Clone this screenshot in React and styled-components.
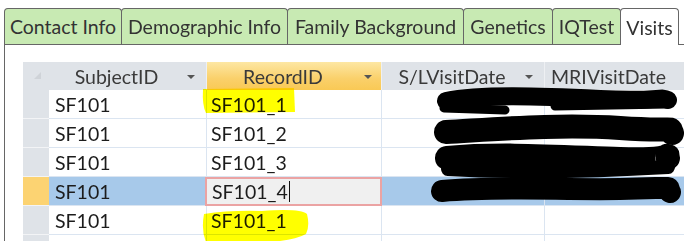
import React from 'react';
import styled, { createGlobalStyle } from 'styled-components';

const GlobalStyle = createGlobalStyle`
  html, body {
    margin: 0;
    padding: 0;
    background: #fff;
  }
  * {
    box-sizing: border-box;
  }
`;

const COLS = '26px 158px 175px 163px 150px';

const Page = styled.div`
  width: 684px;
  height: 241px;
  overflow: hidden;
  font-family: Lato, "Open Sans", sans-serif;
  background: #fff;
`;

const TabBar = styled.div`
  display: flex;
  align-items: flex-end;
  padding: 8px 0 0 4px;
  height: 44px;
`;

const Tab = styled.div`
  position: relative;
  height: ${p => (p.$active ? '37px' : '36px')};
  margin-bottom: ${p => (p.$active ? '-1px' : '0')};
  margin-left: -1px;
  z-index: ${p => (p.$active ? 2 : 1)};
  width: ${p => p.$w}px;
  display: flex;
  align-items: center;
  justify-content: center;
  border: 1px solid #666;
  border-bottom: none;
  border-radius: 4px 4px 0 0;
  background: ${p => (p.$active ? '#fff' : '#c8eab3')};
  color: #333;
  font-size: 19.5px;
  white-space: nowrap;
  &:first-child {
    margin-left: 0;
  }
`;

const Panel = styled.div`
  margin-left: 4px;
  border-top: 1px solid #666;
  border-left: 1px solid #666;
  padding: 17px 0 0 18px;
  height: 197px;
`;

const Grid = styled.div`
  position: relative;
  width: 700px;
`;

const HeaderRow = styled.div`
  display: grid;
  grid-template-columns: ${COLS};
  height: 28px;
  background: #dfe3e8;
`;

const Corner = styled.div`
  position: relative;
  &::after {
    content: '';
    position: absolute;
    left: 11px;
    top: 10px;
    width: 0;
    height: 0;
    border-left: 7px solid transparent;
    border-bottom: 7px solid #cfd3d8;
  }
`;

const HeadCell = styled.div`
  position: relative;
  display: flex;
  align-items: center;
  justify-content: center;
  padding-right: 22px;
  font-size: 19.5px;
  color: #3a3a3a;
  border-right: 1px solid #eef0f3;
  background: ${p => (p.$active ? 'linear-gradient(#fde7a3, #fad06a 60%, #f9c955)' : 'transparent')};
`;

const Arrow = styled.span`
  position: absolute;
  right: ${p => p.$right || 11}px;
  top: 13px;
  width: 0;
  height: 0;
  border-left: 4px solid transparent;
  border-right: 4px solid transparent;
  border-top: 4px solid #555;
`;

const Row = styled.div`
  display: grid;
  grid-template-columns: ${COLS};
  height: 29px;
`;

const Selector = styled.div`
  background: ${p => (p.$current ? '#fcd372' : '#dfe3e8')};
  border-bottom: 1px solid #f3f4f6;
`;

const Cell = styled.div`
  display: flex;
  align-items: center;
  padding-left: ${p => (p.$first ? 6 : 4)}px;
  font-size: 19.5px;
  color: #1c1c1c;
  background: ${p => (p.$selected ? '#a7c9ea' : '#fff')};
  border-right: 1px solid #dbe5f1;
  border-bottom: 1px solid #dbe5f1;
  white-space: nowrap;
`;

const EditCell = styled.div`
  display: flex;
  align-items: center;
  margin-left: -2px;
  padding-left: 5px;
  font-size: 19.5px;
  color: #1c1c1c;
  background: #f0f0f0;
  border: 2px solid #eba3a3;
  white-space: nowrap;
`;

const Caret = styled.span`
  display: inline-block;
  width: 1px;
  height: 21px;
  margin-left: 1px;
  background: #111;
`;

const Marker = styled.svg`
  position: absolute;
  left: 0;
  top: 0;
  pointer-events: none;
  mix-blend-mode: ${p => (p.$multiply ? 'multiply' : 'normal')};
`;

const tabs = [
  { label: 'Contact Info', w: 118 },
  { label: 'Demographic Info', w: 167 },
  { label: 'Family Background', w: 177 },
  { label: 'Genetics', w: 90 },
  { label: 'IQTest', w: 69 },
  { label: 'Visits', w: 59, active: true },
];

const rows = [
  { subject: 'SF101', record: 'SF101_1' },
  { subject: 'SF101', record: 'SF101_2' },
  { subject: 'SF101', record: 'SF101_3' },
  { subject: 'SF101', record: 'SF101_4', current: true },
  { subject: 'SF101', record: 'SF101_1' },
];

// page coords: grid origin is at (23, 62)
const Highlights = () => (
  <Marker $multiply width="320" height="180" viewBox="23 62 320 180">
    <path
      d="M203 89 L294 88 L295 112 L206 113 Q202 105 203 89 Z"
      fill="#ffff00"
    />
    <path
      d="M204 214 Q230 210 262 211 Q300 208 307 214 Q310 226 306 234 Q290 243 250 242 L206 242 Q201 230 204 214 Z"
      fill="#ffff00"
    />
  </Marker>
);

const Scribbles = () => (
  <Marker width="700" height="180" viewBox="23 62 700 180">
    <g stroke="#000" strokeLinecap="round" strokeLinejoin="round" fill="none">
      <path d="M446 101 C 480 94 540 96 600 99 S 660 96 668 100" strokeWidth="18" />
      <path d="M444 108 L 505 110 M555 106 L 668 104" strokeWidth="9" />
      <path d="M446 132 C 500 129 560 124 620 128 S 668 126 672 133" strokeWidth="24" />
      <path d="M447 158 C 500 153 560 157 620 159 S 664 152 668 158" strokeWidth="24" />
      <path d="M448 169 C 520 173 600 171 668 167" strokeWidth="14" />
      <path d="M442 191 C 500 186 560 190 620 189 S 666 186 670 192" strokeWidth="22" />
    </g>
  </Marker>
);

const App = () => {
  return (
    <>
      <GlobalStyle />
      <Page>
        <TabBar>
          {tabs.map(t => (
            <Tab key={t.label} $w={t.w} $active={t.active}>
              {t.label}
            </Tab>
          ))}
        </TabBar>
        <Panel>
          <Grid>
            <HeaderRow>
              <Corner />
              <HeadCell>
                SubjectID
                <Arrow />
              </HeadCell>
              <HeadCell $active>
                RecordID
                <Arrow $right={9} />
              </HeadCell>
              <HeadCell>
                S/LVisitDate
                <Arrow $right={11} />
              </HeadCell>
              <HeadCell>MRIVisitDate</HeadCell>
            </HeaderRow>
            {rows.map((r, i) => (
              <Row key={i}>
                <Selector $current={r.current} />
                <Cell $first $selected={r.current}>{r.subject}</Cell>
                {r.current ? (
                  <EditCell>
                    {r.record}
                    <Caret />
                  </EditCell>
                ) : (
                  <Cell>{r.record}</Cell>
                )}
                <Cell $selected={r.current} />
                <Cell $selected={r.current} />
              </Row>
            ))}
            <Row>
              <Selector />
              <Cell $first />
              <Cell />
              <Cell />
              <Cell />
            </Row>
            <Highlights />
            <Scribbles />
          </Grid>
        </Panel>
      </Page>
    </>
  );
};

export default App;
